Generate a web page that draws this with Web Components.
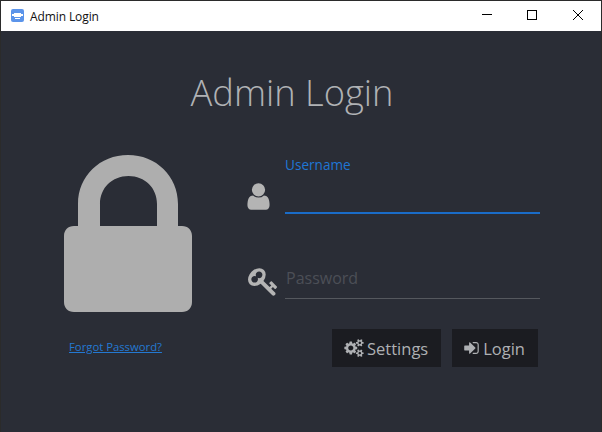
<!DOCTYPE html>
<html><head><meta charset="utf-8"><style>
html,body{margin:0;padding:0;background:#2a2d36}
body{width:602px;height:432px;overflow:hidden;font-family:"Open Sans","Noto Sans",sans-serif}
</style></head><body>
<login-window>
<window-bar slot="bar">Admin Login</window-bar>
<h-title slot="head">Admin Login</h-title>
<lock-panel slot="left"></lock-panel>
<text-field slot="right" icon="user" label="Username" active></text-field>
<text-field slot="right" icon="key" label="Password"></text-field>
<div slot="right" style="display:flex;justify-content:flex-end;gap:11px;padding-right:3px;margin-top:30px">
<dark-button icon="cogs">Settings</dark-button>
<dark-button icon="signin">Login</dark-button>
</div>
</login-window>
<script>
const ICONS={
user:['0 0 1792 1792','M1536 1399q0 109-62.5 187t-150.5 78h-854q-88 0-150.5-78t-62.5-187q0-85 8.5-160.5t31.5-152 58.5-131 94-89 134.5-34.5q131 128 313 128t313-128q76 0 134.5 34.5t94 89 58.5 131 31.5 152 8.5 160.5zm-256-887q0 159-112.5 271.5t-271.5 112.5-271.5-112.5-112.5-271.5 112.5-271.5 271.5-112.5 271.5 112.5 112.5 271.5z'],
key:['0 0 1792 1792','M832 512q0-80-56-136t-136-56-136 56-56 136q0 42 19 83-41-19-83-19-80 0-136 56t-56 136 56 136 136 56 136-56 56-136q0-42-19-83 41 19 83 19 80 0 136-56t56-136zm851 704q0 17-49 66t-66 49q-9 0-28.5-16t-36.5-33-38.5-40-24.5-26l-96 96 220 220q28 28 28 68 0 42-39 81t-81 39q-40 0-68-28l-671-671q-176 131-365 131-163 0-265.5-102.5t-102.5-265.5q0-160 95-313t248-248 313-95q163 0 265.5 102.5t102.5 265.5q0 189-131 365l355 355 96-96q-3-3-26-24.5t-40-38.5-33-36.5-16-28.5q0-17 49-66t66-49q13 0 23 10 6 6 46 44.5t82 79.5 86.5 86 73 78 28.5 41z'],
signin:['0 0 1792 1792','M1312 896q0 26-19 45l-544 544q-19 19-45 19t-45-19-19-45v-288h-448q-26 0-45-19t-19-45v-384q0-26 19-45t45-19h448v-288q0-26 19-45t45-19 45 19l544 544q19 19 19 45zm352-352v704q0 119-84.5 203.5t-203.5 84.5h-320q-13 0-22.5-9.5t-9.5-22.5q0-4-1-20t-.5-26.5 3-23.5 10-19.5 20.5-6.5h320q66 0 113-47t47-113v-704q0-66-47-113t-113-47h-312l-11.5-1-11.5-3-8-5.5-7-9-2-13.5q0-4-1-20t-.5-26.5 3-23.5 10-19.5 20.5-6.5h320q119 0 203.5 84.5t84.5 203.5z'],
cogs:['0 0 1920 1792','M896 896q0-106-75-181t-181-75-181 75-75 181 75 181 181 75 181-75 75-181zm768 512q0-52-38-90t-90-38-90 38-38 90q0 53 37.5 90.5t90.5 37.5 90.5-37.5 37.5-90.5zm0-1024q0-52-38-90t-90-38-90 38-38 90q0 53 37.5 90.5t90.5 37.5 90.5-37.5 37.5-90.5zm-384 421v185q0 10-7 19.5t-16 10.5l-155 24q-11 35-32 76 34 48 90 115 7 11 7 20 0 12-7 19-23 30-82.5 89.5t-78.5 59.5q-11 0-21-7l-115-90q-37 19-77 31-11 108-23 155-7 24-30 24h-186q-11 0-20-7.5t-10-17.5l-23-153q-34-10-75-31l-118 89q-7 7-20 7-11 0-21-8-144-133-144-160 0-9 7-19 10-14 41-53t47-61q-23-44-35-82l-152-24q-10-1-17-9.5t-7-19.5v-185q0-10 7-19.5t16-10.5l155-24q11-35 32-76-34-48-90-115-7-11-7-20 0-12 7-20 22-30 82-89t79-59q11 0 21 7l115 90q34-18 77-32 11-108 23-154 7-24 30-24h186q11 0 20 7.5t10 17.5l23 153q34 10 75 31l118-89q8-7 20-7 11 0 21 8 144 133 144 160 0 8-7 19-12 16-42 54t-45 60q23 48 34 82l152 23q10 2 17 10.5t7 19.5zm640 533v140q0 16-149 31-12 27-30 52 51 113 51 138 0 4-4 7-122 71-124 71-8 0-46-47t-52-68q-20 2-30 2t-30-2q-14 21-52 68t-46 47q-2 0-124-71-4-3-4-7 0-25 51-138-18-25-30-52-149-15-149-31v-140q0-16 149-31 13-29 30-52-51-113-51-138 0-4 4-7 4-2 35-20t59-34 30-16q8 0 46 46.5t52 67.5q20-2 30-2t30 2q51-71 92-112l6-2q4 0 124 70 4 3 4 7 0 25-51 138 17 23 30 52 149 15 149 31zm0-1024v140q0 16-149 31-12 27-30 52 51 113 51 138 0 4-4 7-122 71-124 71-8 0-46-47t-52-68q-20 2-30 2t-30-2q-14 21-52 68t-46 47q-2 0-124-71-4-3-4-7 0-25 51-138-18-25-30-52-149-15-149-31v-140q0-16 149-31 13-29 30-52-51-113-51-138 0-4 4-7 4-2 35-20t59-34 30-16q8 0 46 46.5t52 67.5q20-2 30-2t30 2q51-71 92-112l6-2q4 0 124 70 4 3 4 7 0 25-51 138 17 23 30 52 149 15 149 31z']
};
const svg=(n,w,h,c)=>`<svg width="${w}" height="${h}" viewBox="${ICONS[n][0]}" fill="${c}" style="display:block"><path d="${ICONS[n][1]}"/></svg>`;
class Base extends HTMLElement{
  constructor(){super();this.attachShadow({mode:'open'});}
}
customElements.define('login-window',class extends Base{connectedCallback(){this.shadowRoot.innerHTML=`<style>
:host{display:flex;flex-direction:column;width:602px;height:432px;box-sizing:border-box;background:#2a2d36;border-top:1px solid #2b2b2b;border-left:1px solid #2b2b2b;border-right:1px solid #2b2b2b}
.main{display:flex;padding-top:5px}
.left{width:190px;margin-left:62px;flex:none}
.right{width:293px;margin-left:-5px;flex:none;display:flex;flex-direction:column;margin-top:14px}
</style><slot name="bar"></slot><slot name="head"></slot><div class="main"><div class="left"><slot name="left"></slot></div><div class="right"><slot name="right"></slot></div></div>`;}});
customElements.define('window-bar',class extends Base{connectedCallback(){this.shadowRoot.innerHTML=`<style>
:host{display:flex;align-items:center;height:30px;background:#fff;flex:none;color:#111;font:12px "Open Sans",sans-serif}
.ic{margin-left:10px;margin-right:6px;width:13px;height:13px;margin-top:-1px}
.t{flex:1;letter-spacing:-.1px}
.b{width:45px;height:30px;box-sizing:border-box;padding-bottom:2px;display:flex;align-items:center;justify-content:center}
.min{width:44px}.max,.cls{width:46px}
</style>
<svg class="ic" viewBox="0 0 13 13"><rect width="13" height="13" rx="2" fill="#5b94ea"/><rect x="3" y="4" width="7" height="4" fill="#fff"/><rect x="1" y="5" width="11" height="2" fill="#fff"/><rect x="4" y="9" width="5" height="1" fill="#fff"/></svg>
<span class="t"><slot></slot></span>
<span class="b min"><svg width="10" height="10" viewBox="0 0 10 10"><path d="M0 4.500H10" stroke="#000" fill="none"/></svg></span>
<span class="b max"><svg width="10" height="10" viewBox="0 0 10 10"><rect x=".5" y=".5" width="9" height="9" stroke="#000" fill="none"/></svg></span>
<span class="b cls"><svg width="10" height="10" viewBox="0 0 10 10"><path d="M0 0L10 10M10 0L0 10" stroke="#000" fill="none"/></svg></span>`;}});
customElements.define('h-title',class extends Base{connectedCallback(){this.shadowRoot.innerHTML=`<style>
:host{display:block;text-align:center;font:300 36.3px/50px "Open Sans",sans-serif;color:#b0b2b5;padding:36px 18px 0 0;height:58px}
</style><slot></slot>`;}});
customElements.define('lock-panel',class extends Base{connectedCallback(){this.shadowRoot.innerHTML=`<style>
:host{display:block;padding-top:24px}
svg{display:block}
a{display:block;margin:27px 0 0 6px;color:#2479d2;font-size:11.3px;line-height:16px;text-decoration:underline}
</style><svg width="130" height="158" viewBox="0 0 130 158"><path fill="#aeaeae" d="M15 72V50C15 22 37 1 65 1s50 21 50 49v22h4c6 0 10 4 10 10v66c0 6-4 10-10 10H11c-6 0-10-4-10-10V82c0-6 4-10 10-10zM37 72h57V50c0-16-12-28-28.500-28S37 34 37 50z" fill-rule="evenodd"/></svg><a>Forgot Password?</a>`;}});
customElements.define('text-field',class extends Base{connectedCallback(){
const active=this.hasAttribute('active'),icon=this.getAttribute('icon');
this.shadowRoot.innerHTML=`<style>
:host{display:flex;align-items:flex-end;height:${active?70:85}px;flex:none}
.i{width:37px;flex:none;display:flex;justify-content:flex-start;align-self:flex-end;margin-bottom:2px}
.i svg{margin-left:${active?-5:0}px}
.f{width:255px;box-sizing:border-box;border-bottom:${active?2:1}px solid ${active?'#1a6cc8':'#55585e'};font-size:${active?13.6:16}px;color:${active?'#1f76d4':'#4c4f56'};height:${active?58:30}px;line-height:18px;padding-left:${active?0:1}px}
</style><span class="i">${svg(icon,31,31,'#b4b4b4')}</span><div class="f">${this.getAttribute('label')}</div>`;}});
customElements.define('dark-button',class extends Base{connectedCallback(){
const icon=this.getAttribute('icon');
this.shadowRoot.innerHTML=`<style>
:host{display:flex;align-items:center;gap:3px;height:38px;box-sizing:border-box;padding:0 13px 0 ${icon=='cogs'?12:11}px;background:#1b1c21;color:#aeb0b3;font-size:16.5px}
</style>${svg(icon,icon=='cogs'?20:17,18,'#aeb0b3')}<span><slot></slot></span>`;}});
</script>
</body></html>
